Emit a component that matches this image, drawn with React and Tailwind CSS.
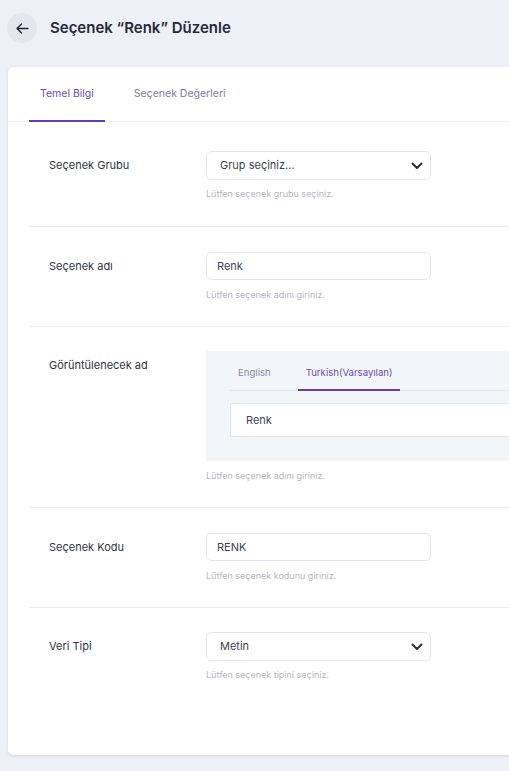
import React from "react";

const Chevron = () => (
  <svg width="12" height="8" viewBox="0 0 12 8" fill="none" className="shrink-0">
    <path d="M1.5 1.5L6 6L10.5 1.5" stroke="#2b2f3e" strokeWidth="2" strokeLinecap="round" strokeLinejoin="round" />
  </svg>
);

const Label = ({ children }) => (
  <div className="w-[177px] shrink-0 pl-[20px] pt-[7px] text-[11px] leading-[14px] text-[#2f3344]">
    {children}
  </div>
);

const Helper = ({ children, className = "" }) => (
  <div className={"text-[9px] leading-[11px] text-[#b5b5c3] " + className}>{children}</div>
);

const Row = ({ label, children, last, top = "pt-[25px]", bottom = "pb-[26px]" }) => (
  <div className={"flex " + top + " " + bottom + (last ? "" : " border-b border-[#ebedf3]")}>
    <Label>{label}</Label>
    <div className="flex-1 flex flex-col">{children}</div>
  </div>
);

const Select = ({ value }) => (
  <div className="w-[225px] h-[29px] rounded-[5px] border border-[#e4e6ef] bg-white flex items-center justify-between pl-[13px] pr-[7px]">
    <span className="text-[11px] text-[#3f4254]">{value}</span>
    <Chevron />
  </div>
);

const Input = ({ value }) => (
  <div className="w-[225px] h-[28px] rounded-[5px] border border-[#e4e6ef] bg-white flex items-center pl-[10px]">
    <span className="text-[11px] text-[#3f4254]">{value}</span>
  </div>
);

export default function App() {
  return (
    <div className="min-h-[771px] bg-[#eef0f8] overflow-hidden" style={{ fontFamily: "Inter, 'Noto Sans', sans-serif" }}>
      <div className="flex items-center h-[56px] pl-[7px]">
        <button className="w-[30px] h-[30px] rounded-full bg-[#e4e6ef] flex items-center justify-center">
          <svg width="13" height="11" viewBox="0 0 13 11" fill="none">
            <path d="M12 5.5H1.5M5.5 1L1 5.5L5.5 10" stroke="#1e2230" strokeWidth="1.3" strokeLinecap="round" strokeLinejoin="round" />
          </svg>
        </button>
        <h1 className="ml-[13px] text-[15px] font-semibold text-[#262a3a]">Seçenek “Renk” Düzenle</h1>
      </div>
      <div className="ml-[8px] mt-[11px] w-[560px] bg-white rounded-[5px] shadow-[0_1px_3px_rgba(80,90,120,0.18)]">
        <div className="flex h-[55px] border-b border-[#ebedf3] pl-[21px]">
          <div className="flex items-center px-[11px] border-b-2 border-[#5f3fb3] -mb-px text-[10.5px] text-[#6a4bbd]">Temel Bilgi</div>
          <div className="flex items-center ml-[18px] px-[11px] text-[10.5px] text-[#7f7b9c]">Seçenek Değerleri</div>
        </div>
        <div className="pl-[21px]">
          <Row label="Seçenek Grubu" top="pt-[29px]" bottom="pb-[27px]">
            <Select value="Grup seçiniz..." />
            <Helper className="mt-[8px]">Lütfen seçenek grubu seçiniz.</Helper>
          </Row>
          <Row label="Seçenek adı" top="pt-[25px]" bottom="pb-[26px]">
            <Input value="Renk" />
            <Helper className="mt-[9px]">Lütfen seçenek adını giriniz.</Helper>
          </Row>
          <Row label="Görüntülenecek ad" top="pt-[24px]" bottom="pb-[26px]">
            <div className="w-[400px] bg-[#f3f6f9] pt-[15px] pb-[24px] pl-[24px]">
              <div className="flex border-b border-[#e4e6ef]">
                <div className="px-[8px] pb-[10px] text-[9.6px] leading-[14px] text-[#8c88a8]">English</div>
                <div className="ml-[19px] px-[8px] pb-[9px] border-b-2 border-[#5f3fb3] -mb-px text-[9.6px] leading-[14px] text-[#6a4bbd]">Turkish(Varsayılan)</div>
              </div>
              <div className="mt-[12px] h-[34px] bg-white border border-[#e4e6ef] flex items-center pl-[15px]">
                <span className="text-[11px] text-[#3f4254]">Renk</span>
              </div>
            </div>
            <Helper className="mt-[9px]">Lütfen seçenek adını giriniz.</Helper>
          </Row>
          <Row label="Seçenek Kodu" top="pt-[25px]" bottom="pb-[26px]">
            <Input value="RENK" />
            <Helper className="mt-[9px]">Lütfen seçenek kodunu giriniz.</Helper>
          </Row>
          <Row label="Veri Tipi" last top="pt-[24px]" bottom="pb-[75px]">
            <Select value="Metin" />
            <Helper className="mt-[8px]">Lütfen seçenek tipini seçiniz.</Helper>
          </Row>
        </div>
      </div>
    </div>
  );
}
